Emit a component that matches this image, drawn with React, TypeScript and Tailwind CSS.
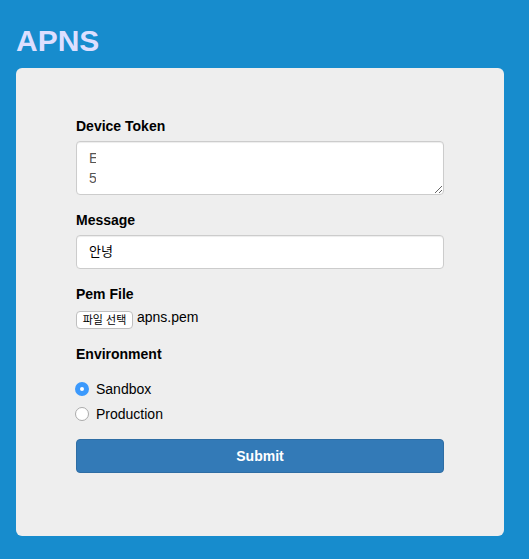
import { useState } from "react";

const inputStyle =
  "block w-full rounded border border-[#cccccc] bg-white px-3 leading-5 shadow-[inset_0_1px_1px_rgba(0,0,0,0.075)] outline-none focus:border-[#66afe9]";

const radioStyle =
  "-ml-px size-3.5 appearance-none rounded-full border border-[#aaaaaa] bg-white checked:border-[5px] checked:border-[#3b99fc]";

export default function App() {
  const [fileName, setFileName] = useState("apns.pem");

  return (
    <main className="min-h-screen bg-[#178ccd] pt-5 pr-[25px] pb-6 pl-4 font-['Helvetica_Neue',Helvetica,'Liberation_Sans','Noto_Sans_CJK_KR',sans-serif] text-sm leading-5 text-black">
      <h1 className="mb-1.5 text-[30px] leading-[42px] font-bold text-[#dddfff]">APNS</h1>
      <form
        className="rounded-md bg-[#eeeeee] px-[60px] pt-12 pb-[63px]"
        onSubmit={(e) => e.preventDefault()}
      >
        <div className="mb-[15px]">
          <label htmlFor="token" className="mb-[5px] block font-bold">
            Device Token
          </label>
          <div className="relative">
            <textarea
              id="token"
              rows={2}
              defaultValue={"E\n5"}
              className={`${inputStyle} h-[54px] resize overflow-hidden py-1.5 text-sm text-[#555555]`}
            />
            <span className="pointer-events-none absolute inset-y-1 right-5 left-5 bg-white" />
          </div>
        </div>

        <div className="mb-[15px]">
          <label htmlFor="message" className="mb-[5px] block font-bold">
            Message
          </label>
          <input
            id="message"
            type="text"
            defaultValue="안녕"
            className={`${inputStyle} h-[34px] pt-1 pb-2 text-[13px]`}
          />
        </div>

        <div className="mb-[15px]">
          <label htmlFor="pem" className="mb-[5px] block font-bold">
            Pem File
          </label>
          <div className="flex h-5 gap-1">
            <input
              id="pem"
              type="file"
              className="peer sr-only"
              onChange={(e) => setFileName(e.target.files?.[0]?.name ?? "")}
            />
            <label
              htmlFor="pem"
              className="mt-0.5 h-[18px] w-[57px] shrink-0 rounded border border-[#bfbfbf] bg-white text-center text-[11px] leading-4 peer-focus-visible:ring-2"
            >
              파일 선택
            </label>
            <span className="-mt-0.5">{fileName}</span>
          </div>
        </div>

        <fieldset className="mb-[15px]">
          <legend className="mb-[15px] font-bold">Environment</legend>
          <div className="flex flex-col gap-[5px]">
            <label className="flex items-center gap-[7px]">
              <input type="radio" name="environment" defaultChecked className={radioStyle} />
              Sandbox
            </label>
            <label className="flex items-center gap-[7px]">
              <input type="radio" name="environment" className={radioStyle} />
              Production
            </label>
          </div>
        </fieldset>

        <button
          type="submit"
          className="block h-[34px] w-full rounded border border-[#2e6da4] bg-[#337ab7] text-center font-bold text-white hover:bg-[#286090]"
        >
          Submit
        </button>
      </form>
    </main>
  );
}
